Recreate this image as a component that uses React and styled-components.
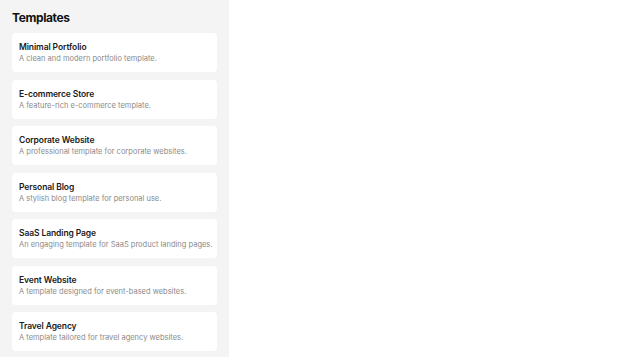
import React from 'react';
import styled, { createGlobalStyle } from 'styled-components';

const GlobalStyle = createGlobalStyle`
  html, body {
    margin: 0;
    padding: 0;
    background: #ffffff;
    font-family: Inter, "Noto Sans", sans-serif;
  }
`;

const Page = styled.div`
  display: flex;
  height: 357px;
  overflow: hidden;
`;

const Sidebar = styled.aside`
  width: 229px;
  flex-shrink: 0;
  background: #f4f4f4;
  padding: 11px 12px 0 12px;
  box-sizing: border-box;
  display: flex;
  flex-direction: column;
`;

const Heading = styled.h2`
  margin: 0 0 8px 0;
  font-size: 12px;
  line-height: 14px;
  font-weight: 700;
  letter-spacing: -0.4px;
  color: #111;
`;

const List = styled.div`
  display: flex;
  flex-direction: column;
  gap: 7.5px;
  width: 205px;
`;

const Card = styled.div`
  background: #ffffff;
  border-radius: 4px;
  height: 39px;
  box-sizing: border-box;
  padding: 9px 7px 0 7px;
  display: flex;
  flex-direction: column;
  gap: 2px;
`;

const Title = styled.div`
  font-size: 8.5px;
  line-height: 10px;
  font-weight: 600;
  letter-spacing: -0.1px;
  color: #1a1a1a;
`;

const Desc = styled.div`
  font-size: 7.5px;
  line-height: 10px;
  color: #8a8a8a;
  white-space: nowrap;
`;

const templates = [
  { name: 'Minimal Portfolio', desc: 'A clean and modern portfolio template.' },
  { name: 'E-commerce Store', desc: 'A feature-rich e-commerce template.' },
  { name: 'Corporate Website', desc: 'A professional template for corporate websites.' },
  { name: 'Personal Blog', desc: 'A stylish blog template for personal use.' },
  { name: 'SaaS Landing Page', desc: 'An engaging template for SaaS product landing pages.' },
  { name: 'Event Website', desc: 'A template designed for event-based websites.' },
  { name: 'Travel Agency', desc: 'A template tailored for travel agency websites.' },
];

const App = () => (
  <>
    <GlobalStyle />
    <Page>
      <Sidebar>
        <Heading>Templates</Heading>
        <List>
          {templates.map(t => (
            <Card key={t.name}>
              <Title>{t.name}</Title>
              <Desc>{t.desc}</Desc>
            </Card>
          ))}
        </List>
      </Sidebar>
    </Page>
  </>
);

export default App;
